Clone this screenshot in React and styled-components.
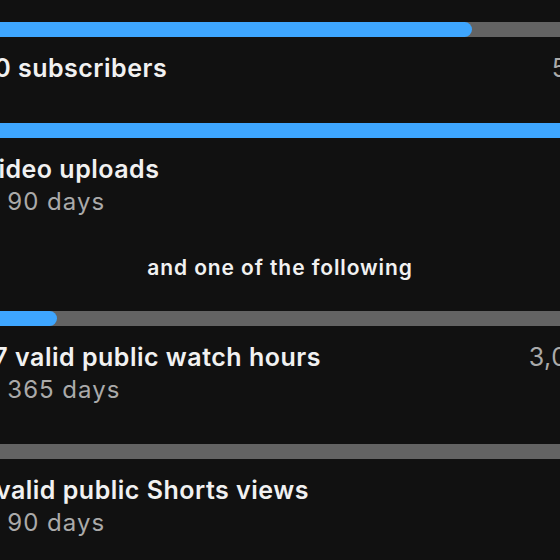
import React from 'react'
import styled, { createGlobalStyle } from 'styled-components'

const GlobalStyle = createGlobalStyle`
  html, body {
    margin: 0;
    padding: 0;
    background: #111111;
  }
  body {
    font-family: Inter, "Noto Sans", "Liberation Sans", sans-serif;
    -webkit-font-smoothing: antialiased;
  }
`

const requirements = [
  { title: '400 subscribers', target: '500', current: 400, total: 500 },
  { title: '3 video uploads', sub: 'Last 90 days', target: '3', current: 3, total: 3 },
  { title: '457 valid public watch hours', sub: 'Last 365 days', target: '3,000', current: 457, total: 3000 },
  { title: '1K valid public Shorts views', sub: 'Last 90 days', target: '3M', current: 0, total: 3000000 },
]

const Screen = () => {
  const renderRow = (item) => {
    const pct = Math.min(item.current / item.total, 1) * 100
    return (
      <Row key={item.title}>
        <Track>
          <Fill style={{ width: `${pct}%` }} />
        </Track>
        <Header>
          <Title>{item.title}</Title>
          <Target>{item.target}</Target>
        </Header>
        {item.sub && <Sub>{item.sub}</Sub>}
      </Row>
    )
  }

  return (
    <Viewport>
      <Panel>
        {requirements.slice(0, 2).map(renderRow)}
        <Divider>and one of the following</Divider>
        {requirements.slice(2).map(renderRow)}
      </Panel>
    </Viewport>
  )
}

export default function App() {
  return (
    <>
      <GlobalStyle />
      <Screen />
    </>
  )
}

const Viewport = styled.main`
  width: 560px;
  height: 560px;
  overflow: hidden;
  background: #111111;
`

// the screen is wider than the visible crop, cut evenly on both sides
const Panel = styled.div`
  width: 640px;
  margin-left: -40px;
  padding-top: 22px;
  display: flex;
  flex-direction: column;
`

const Row = styled.section`
  display: flex;
  flex-direction: column;
  padding-bottom: 40px;
`

const Track = styled.div`
  height: 15px;
  background: #636363;
  display: flex;
`

const Fill = styled.div`
  height: 100%;
  background: #3ea6ff;
  border-radius: 8px;
`

const Header = styled.div`
  margin-top: 16px;
  display: flex;
  justify-content: space-between;
  align-items: baseline;
  font-size: 25px;
  line-height: 30px;
  letter-spacing: 0.5px;
  white-space: nowrap;
`

const Title = styled.h3`
  margin: 0;
  font-size: inherit;
  font-weight: 600;
  color: #f1f1f1;
`

const Target = styled.span`
  font-weight: 400;
  color: #aaaaaa;
`

const Sub = styled.p`
  margin: 4px 0 0;
  text-indent: -12px;
  font-size: 24px;
  line-height: 28px;
  letter-spacing: 1px;
  color: #aaaaaa;
  white-space: nowrap;
`

const Divider = styled.p`
  margin: 0 0 31px;
  text-align: center;
  font-size: 21px;
  line-height: 24px;
  letter-spacing: 0.9px;
  font-weight: 600;
  color: #f1f1f1;
`
